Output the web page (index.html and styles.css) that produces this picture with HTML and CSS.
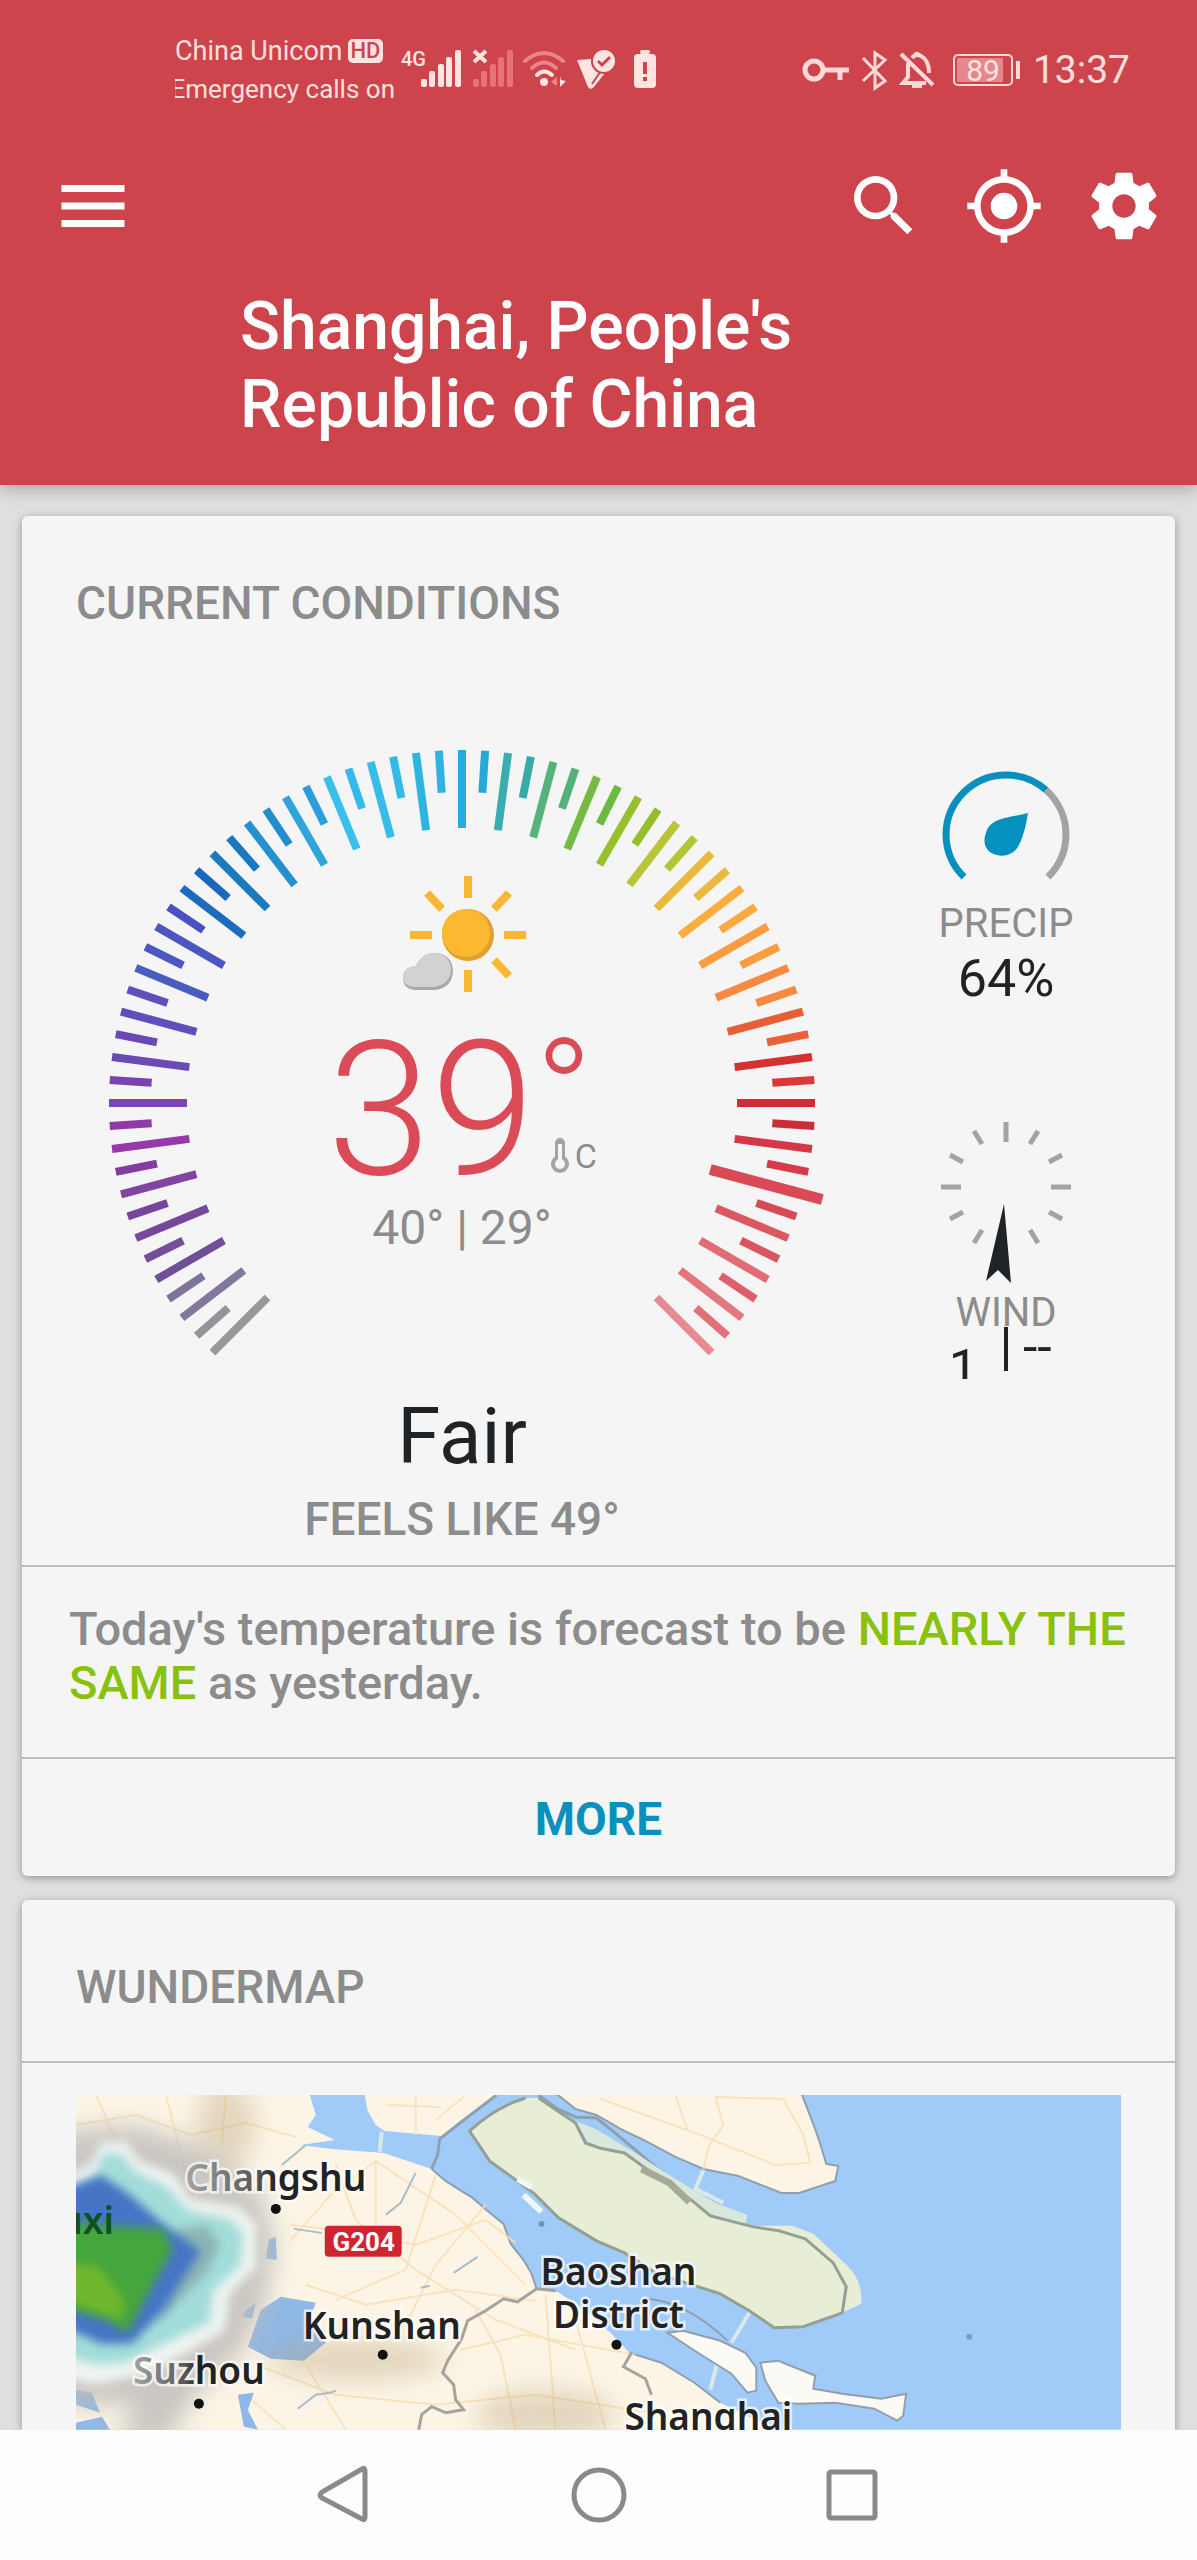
FILE: index.html
```html
<!DOCTYPE html>
<html lang="en">
  <head>
    <meta charset="UTF-8" />
    <meta name="viewport" content="width=device-width, initial-scale=1.0" />
    <title>Weather - Shanghai</title>
    <link rel="stylesheet" href="styles.css">
  </head>
  <body>
    <header class="header">
      <div class="status">
        <div class="carrier">
          <div class="carrier-name">China Unicom <span class="hd">HD</span></div>
          <div class="carrier-sub"><span>Emergency calls on</span></div>
        </div>
        <svg class="status-icons" width="260" height="44" viewBox="400 46 260 44" fill="#ffe4e1">
          <text class="net" x="401" y="66">4G</text>
          <g>
            <rect x="421" y="79" width="6" height="8" rx="2" />
            <rect x="429" y="71" width="6" height="16" rx="2" />
            <rect x="438" y="64" width="6" height="23" rx="2" />
            <rect x="446" y="57" width="6" height="30" rx="2" />
            <rect x="455" y="50" width="6" height="37" rx="2" />
          </g>
          <path d="M474 51l12 11M486 51l-12 11" stroke="#ffe4e1" stroke-width="4" />
          <g fill="#e8727a">
            <rect x="473" y="79" width="6" height="8" rx="2" />
            <rect x="481" y="71" width="6" height="16" rx="2" />
            <rect x="490" y="64" width="6" height="23" rx="2" />
            <rect x="498" y="57" width="6" height="30" rx="2" />
            <rect x="507" y="50" width="6" height="37" rx="2" />
          </g>
          <g fill="none" stroke="#ec8388" stroke-width="4" stroke-linecap="round">
            <path d="M525 61q19-16 38 0" />
            <path d="M532 68q12-11 24 0" />
            <path d="M537 75q7-7 15 0" stroke="#ffe4e1" />
          </g>
          <circle cx="544" cy="82" r="4" />
          <path d="M551 82l6-5v9z" fill="#ec8388" />
          <path d="M560 76l1 4 5 1-6 6z" />
          <path d="M577 60l14-1q0 12 14 14l-12 15q-3 2-5-1z" />
          <path d="M592 84l11-16" stroke="#ce444d" stroke-width="2" />
          <circle cx="604" cy="61" r="13" fill="#ce444d" />
          <circle cx="604" cy="61" r="11" />
          <path d="M598 61l4 4 8-8" fill="none" stroke="#ce444d" stroke-width="3" />
          <rect x="640" y="50" width="10" height="4" rx="2" />
          <rect x="634" y="54" width="22" height="34" rx="4" />
          <path d="M645 62v12M645 77v4" stroke="#ce444d" stroke-width="4" />
        </svg>
        <div class="status-right">
          <svg width="220" height="44" viewBox="802 46 220 44" fill="none" stroke="#ffd9d6" stroke-width="4">
            <circle cx="814" cy="68" r="9" stroke-width="5" />
            <path d="M824 68h25M840 68v10" stroke-width="5" />
            <path d="M863 56l22 23-10 7V51l10 7-22 21" stroke-width="3" />
            <path d="M901 52l32 31M908 61v14l-5 6h23M912 56q4-5 9-2 8 4 8 17M915 54q1-4 4-1" stroke-width="4" />
            <path d="M912 84h10" />
            <rect x="954" y="53" width="58" height="30" rx="4" stroke-width="2" />
            <rect x="957" y="56" width="46" height="24" fill="#e6878d" stroke="none" />
            <path d="M1018 59v18" />
            <text class="battery" x="983" y="79">89</text>
          </svg>
          <span class="clock">13:37</span>
        </div>
      </div>
      <nav class="toolbar">
        <button class="icon-btn" aria-label="Menu">
          <svg width="84" height="84" viewBox="0 0 24 24"><path d="M3 18h18v-2H3v2zm0-5h18v-2H3v2zm0-7v2h18V6H3z" /></svg>
        </button>
        <div class="actions">
          <button class="icon-btn" aria-label="Search">
            <svg width="80" height="80" viewBox="0 0 24 24"><path d="M15.5 14h-.79l-.28-.27A6.471 6.471 0 0 0 16 9.5 6.5 6.5 0 1 0 9.5 16c1.61 0 3.09-.59 4.23-1.57l.27.28v.79l5 4.99L20.49 19l-4.99-5zm-6 0C7.01 14 5 11.99 5 9.5S7.01 5 9.5 5 14 7.01 14 9.5 11.99 14 9.5 14z" /></svg>
          </button>
          <button class="icon-btn" aria-label="My location">
            <svg width="80" height="80" viewBox="0 0 24 24"><path d="M12 8c-2.21 0-4 1.79-4 4s1.79 4 4 4 4-1.790 4-4-1.790-4-4-4zm8.940 3A8.994 8.994 0 0 0 13 3.060V1h-2v2.060A8.994 8.994 0 0 0 3.060 11H1v2h2.060A8.994 8.994 0 0 0 11 20.940V23h2v-2.060A8.994 8.994 0 0 0 20.940 13H23v-2h-2.060zM12 19c-3.870 0-7-3.130-7-7s3.130-7 7-7 7 3.130 7 7-3.130 7-7 7z" /></svg>
          </button>
          <button class="icon-btn" aria-label="Settings">
            <svg width="80" height="80" viewBox="0 0 24 24"><path d="M19.430 12.980c.04-.32.07-.64.07-.98s-.03-.66-.07-.98l2.110-1.650c.19-.15.24-.42.12-.64l-2-3.460c-.12-.22-.39-.3-.61-.22l-2.490 1c-.52-.4-1.080-.73-1.690-.98l-.38-2.650A.488.488 0 0 0 14 2h-4c-.25 0-.46.18-.49.42l-.38 2.650c-.61.25-1.170.59-1.690.98l-2.490-1c-.23-.09-.49 0-.61.22l-2 3.460c-.13.22-.07.49.12.64l2.110 1.650c-.04.32-.07.65-.07.98s.03.66.07.98l-2.110 1.650c-.19.15-.24.42-.12.64l2 3.460c.12.22.39.3.61.22l2.490-1c.52.4 1.080.73 1.690.98l.38 2.650c.03.24.24.42.49.42h4c.25 0 .46-.18.49-.42l.38-2.650c.61-.25 1.170-.59 1.690-.98l2.490 1c.23.09.49 0 .61-.22l2-3.460c.12-.22.07-.49-.12-.64l-2.110-1.650zM12 15.500c-1.930 0-3.500-1.570-3.500-3.500s1.570-3.500 3.500-3.500 3.500 1.570 3.500 3.500-1.570 3.500-3.500 3.500z" /></svg>
          </button>
        </div>
      </nav>
      <h1 class="city">Shanghai, People's Republic of China</h1>
    </header>

    <main class="content">
      <section class="card">
        <h2 class="card-title">CURRENT CONDITIONS</h2>
        <div class="conditions">
          <div class="now">
            <div class="gauge">
              <svg id="dial" class="dial" viewBox="-380 -360 760 620"></svg>
              <div class="readout">
                <svg class="sky" width="130" height="122" viewBox="397 874 130 122">
                  <g stroke="#f9b733" stroke-width="8">
                    <path d="M468 876v22M468 970v22M410 935h22M504 935h22M427 893l15 16M509 893l-15 16M509 976l-15-16" />
                  </g>
                  <circle cx="468" cy="935" r="26" fill="#e0a032" />
                  <ellipse cx="466" cy="933" rx="24" ry="24" fill="#fbb830" />
                  <path d="M415 990q-12-1-12-12t13-12q6-13 19-13 17 1 18 18-1 17-18 19z" fill="#a9a9a9" />
                  <path d="M415 987q-12-1-12-10t13-11q6-13 18-13 16 1 17 17-1 15-18 17z" fill="#d2d2d2" />
                </svg>
                <div class="temp">
                  <span class="temp-value">39</span>
                  <div class="temp-unit">
                    <span class="degree">°</span>
                    <span class="scale">
                      <svg width="18" height="36" viewBox="0 0 18 36">
                        <path d="M9 5v20" stroke="#a4a4a4" stroke-width="10" stroke-linecap="round" />
                        <circle cx="9" cy="26" r="9" fill="#a4a4a4" />
                        <path d="M9 6v20" stroke="#f5f5f5" stroke-width="4" />
                        <circle cx="9" cy="26" r="5" fill="#f5f5f5" />
                      </svg>C</span>
                  </div>
                </div>
                <div class="high-low">40° | 29°</div>
              </div>
            </div>
            <p class="sky-text">Fair</p>
            <p class="feels">FEELS LIKE 49°</p>
          </div>

          <div class="side">
            <svg width="132" height="115" viewBox="-66 -65 132 115" fill="none" stroke-width="7">
              <path d="M40-45A60 60 0 0 1 60 0 60 60 0 0 1 42 42" stroke="#a3a3a3" />
              <path d="M-42 42A60 60 0 0 1-60 0 60 60 0 0 1 0-60 60 60 0 0 1 40-45" stroke="#0a90bd" />
              <path d="M22-22Q19-2 13 10C8 20-2 22-9 20-20 18-24 8-20-2-16-18 4-17 22-22z" fill="#0591bf" />
            </svg>
            <div class="label">PRECIP</div>
            <div class="value">64%</div>

            <svg class="compass" width="132" height="164" viewBox="-66 -66 132 164">
              <path d="M0-65v20M-65 0h20M65 0h-20M-32-56l8 13M32-56l-8 13M-56-32l13 7M56-32l-13 7M-56 32l13-7M56 32l-13-7M-32 56l8-13M32 56l-8-13" stroke="#a3a3a3" stroke-width="5" />
              <path d="M-2 17L5 96-8 83-20 94z" fill="#202325" />
            </svg>
            <div class="label wind-label">WIND</div>
            <div class="wind">
              <span class="wind-speed">1</span>
              <span class="wind-bar"></span>
              <span class="wind-gust">--</span>
            </div>
          </div>
        </div>
        <p class="forecast">Today's temperature is forecast to be <span class="same">NEARLY THE SAME</span> as yesterday.</p>
        <button class="more">MORE</button>
      </section>

      <section class="card map-card">
        <h2 class="card-title">WUNDERMAP</h2>
        <div class="map-wrap">
          <svg class="map" viewBox="0 0 1046 335">
            <defs>
              <filter id="soft" x="-20%" y="-20%" width="140%" height="140%"><feGaussianBlur stdDeviation="5" /></filter>
              <filter id="haze" x="-20%" y="-20%" width="140%" height="140%"><feGaussianBlur stdDeviation="12" /></filter>
              <linearGradient id="fade"><stop offset="0" stop-color="#a5a5a5" /><stop offset=".4" stop-color="#555" /><stop offset=".5" stop-color="#222" /></linearGradient>
            </defs>
            <rect width="1046" height="335" fill="#a0cbf8" />

            <!-- mainland -->
            <g fill="#fcf5e6" stroke="#8f9fae" stroke-width="2">
              <path stroke="none" d="M0 0H234L240 20 232 32 259 45 225 50 256 54 308 58 356 74 366 83 397 103 428 129 435 149 456 179 461 194 482 197 512 217 536 239 554 258 586 268 619 288 645 308 700 335H0z" />
              <path fill="none" d="M356 74L370 86 384 95 397 103 412 116 428 129 435 149 448 165 456 179 461 194M554 258L586 268 619 288 645 308" />
              <path stroke="none" d="M289 0L292 16 300 30 309 36 366 41 383 29 421 0z" />
              <path d="M480-2L500 14 521 20 545 34 570 46 600 62 628 74 663 81 706 98 724 98 760 86 763 71 751 69 744 46 738 29 726-2z" />
            </g>
            <path d="M356 74L362 60 364 44 383 29 421 0M463 0L482 14 500 22 521 23 548 45 580 72 612 96 640 113" fill="none" stroke="#8f9fae" stroke-width="3" />

            <!-- roads -->
            <g fill="none" stroke="#f8dfb4" stroke-width="2" opacity=".8">
              <path d="M0 30L60 20 115 40 170 28 220 42M20 0L40 45M90 0L108 70 120 120M150 0L146 50" />
              <path d="M215 145L255 100 300 66 380 120 450 190M215 130L260 135 340 150 410 125 440 148M230 190L290 210 380 195 460 206" />
              <path d="M260 70L280 125 340 175 420 225 500 255M300 66L300 130M360 80L330 175 260 205M410 110L360 170 330 230" />
              <path d="M180 270L260 300 360 310 460 300 590 320M170 300L210 335M230 270L270 335M400 215L425 260 440 335M470 200L480 335M385 255L450 240 560 260M500 225L530 335" />
              <path d="M525 4L620 38 700 70 735 68 728 40 708 4 640 2M640 2L648 30 634 50 628 74M600 0L612 35M310 10L365 12M340 0V40M390 0L360 25" />
            </g>
            <path d="M304 57L306 37M628 75L620 94 648 108M674 218L656 248M644 260L635 295" stroke="#d9e9e8" stroke-width="4" fill="none" />

            <!-- islands -->
            <path d="M514 50L500 26 520 34 560 58 600 84 640 108 672 120 670 130 600 108z" fill="#d8e9dc" />
            <path d="M450 3Q420 12 394 36L414 66 432 79 459 99 483 123 521 146 549 158 580 178 620 191 645 199 674 216 699 233 728 232 767 218 786 209Q788 185 770 169L738 139 717 131 678 131 635 121 617 106 578 79 549 58 524 53 510 48 500 28 463 3z" fill="#e8edd6" />
            <path d="M450 3Q420 12 394 36L414 66 432 79 459 99 483 123 521 146 549 158 580 178 620 191 645 199 674 216 699 233 728 232 767 218 771 192 758 168 730 144 704 136 678 132 635 121 617 106 578 79 549 58 524 53 510 48 500 28 463 3" fill="none" stroke="#95a094" stroke-width="3" />
            <path d="M566 74L594 88 614 107" fill="none" stroke="#a5aa98" stroke-width="7" />
            <path d="M442 84l14 8M448 100l18 17" stroke="#f1f7f5" stroke-width="6" />
            <g fill="#fcfaf5" stroke="#8f9fae" stroke-width="2">
              <path d="M592 238L608 236 645 246 670 258 681 273 681 296 672 298 656 279 624 259z" />
              <path d="M685 268L703 266 740 281 738 294 767 299 806 304 831 299 828 321 822 326 799 314 760 308 724 309 703 308 690 286z" />
              <path fill="none" d="M570 204Q610 206 652 246" />
            </g>

            <!-- lakes and borders -->
            <path d="M193 145L200 142 201 165 190 164zM170 215L180 208 176 224 166 222zM185 215L205 202 240 208 232 230 250 248 228 266 195 264 172 252zM0 295L16 298 24 318 0 310zM0 328L26 322 34 335H0zM162 300L178 298 172 315 182 335 168 332z" fill="#8fb8e6" />
            <path d="M206 70L230 50M340 78L325 108 310 120M378 178L402 162M345 193L354 191M222 314L240 300 254 298 260 296M218 134L246 138" fill="none" stroke="#a9bccb" stroke-width="2" />
            <path d="M480 196L461 194 442 207 428 204 410 216 392 226 386 244 372 266 367 278 378 290 380 305 388 315 370 318 356 312 346 320 343 335M556 258L548 272 570 284 576 300" fill="none" stroke="#a6a39d" stroke-width="3" />
            <g filter="url(#haze)" opacity=".35" fill="#b79f77">
              <ellipse cx="280" cy="265" rx="90" ry="22" />
              <ellipse cx="470" cy="320" rx="70" ry="26" />
              <ellipse cx="150" cy="30" rx="30" ry="45" />
            </g>

            <!-- radar -->
            <g filter="url(#haze)">
              <path d="M-20 35L60 30 130 52 185 95 200 150 190 210 165 260 120 300 90 350H40L60 310-20 310z" fill="#bdbbb9" opacity=".8" />
            </g>
            <g filter="url(#soft)">
              <path d="M-20 85L14 70 25 48 49 46 64 66 97 79 115 104 163 112 180 129 180 173 154 199 149 236 115 256 70 280 18 290-20 280z" fill="#eef4f2" />
              <path d="M-20 110L18 82 27 58 45 58 60 76 92 92 112 115 155 124 168 140 165 170 138 196 134 228 104 242 50 268 20 270-20 260z" fill="#a3ddd9" />
              <path d="M100 135L130 130 145 150 130 180 95 215 80 230z" fill="#8bb5b5" />
            </g>
            <path d="M-30 100L25 80 53 99 87 129 125 156 87 216 56 249 25 249-30 224z" fill="#4574c4" filter="url(#soft)" />
            <path d="M-30 122L36 132 88 134 96 156 70 203 52 238 30 225-30 208z" fill="#45a63c" filter="url(#soft)" />
            <path d="M-30 165L22 172 48 205 46 225-30 200z" fill="#7cbc2c" opacity=".8" filter="url(#soft)" />

            <g class="places">
              <text x="200" y="96" fill="url(#fade)">Changshu</text>
              <text x="306" y="244">Kunshan</text>
              <text x="123" y="289" fill="url(#fade)">Suzhou</text>
              <text x="543" y="190">Baoshan</text>
              <text x="543" y="233">District</text>
              <text x="633" y="335">Shanghai</text>
            </g>
            <text class="wuxi" x="38" y="139">Wuxi</text>
            <g fill="#111">
              <circle cx="200" cy="114" r="5" />
              <circle cx="307" cy="260" r="5" />
              <circle cx="123" cy="309" r="5" />
              <circle cx="541" cy="250" r="5" />
            </g>
            <circle cx="894" cy="242" r="3" fill="#759fc4" />
            <circle cx="466" cy="129" r="3" fill="#6d93b8" />
            <rect x="249" y="131" width="77" height="31" rx="4" fill="#cf2531" />
            <text class="road" x="288" y="156">G204</text>
          </svg>
        </div>
      </section>
    </main>

    <footer class="navbar">
      <button class="icon-btn" aria-label="Back">
        <svg width="60" height="60" viewBox="0 0 60 60"><path d="M47 4q3-2 3 2v46q0 4-3 2L7 33q-4-3 0-6z" /></svg>
      </button>
      <button class="icon-btn" aria-label="Home">
        <svg width="60" height="60" viewBox="0 0 60 60"><circle cx="30" cy="30" r="25" /></svg>
      </button>
      <button class="icon-btn" aria-label="Recent apps">
        <svg width="60" height="60" viewBox="0 0 60 60"><rect x="6" y="7" width="46" height="46" rx="2" /></svg>
      </button>
    </footer>

    <script>
      // one colour per tick, from the cold end to the hot end
      const colors = [
        "#9a979b", "#97939a", "#83779d", "#7f739a", "#6f4f98", "#724f9a", "#76479a", "#77459b",
        "#8244a3", "#813ea1", "#9639ab", "#8f3aa8", "#7a45b0", "#7a43b0", "#6a4ab5", "#6b48b3",
        "#5d50ba", "#5e4fba", "#4a5cc0", "#4b58c0", "#4b55c4", "#4b50c5", "#1c6bbd", "#1d66bd",
        "#1a7ac0", "#1878c0", "#2590d0", "#238ccd", "#2fa5dc", "#2b9ddb", "#3abfec", "#35b8ea",
        "#38bdea", "#35b9e6", "#2db5e0", "#30b3de", "#29abdc", "#28a8d8", "#3aaeaf", "#36abaa",
        "#55b47b", "#52b278", "#74ba44", "#6cba40", "#98c02c", "#95bf2a", "#b9c438", "#b4c434",
        "#e8b93d", "#eab93f", "#fbad3f", "#faa93f", "#f99c42", "#fb9c40", "#f78a42", "#f68a42",
        "#e65f36", "#e96038", "#d2332f", "#d93a38", "#d02c38", "#cc2c38", "#d43846", "#d73a48",
        "#d94a56", "#d94a57", "#d95862", "#db5561", "#e06c76", "#dc5f6b", "#e37780", "#e17079",
        "#e78b92"
      ];
      const current = 64;
      const dial = document.getElementById("dial");

      colors.forEach((color, i) => {
        const tick = document.createElementNS("http://www.w3.org/2000/svg", "line");
        const long = i % 2 === 0;
        tick.setAttribute("y1", i === current ? -373 : -353);
        tick.setAttribute("y2", i === current ? -257 : long ? -275 : -311);
        tick.setAttribute("stroke", color);
        tick.setAttribute("stroke-width", i === current ? 11 : 8);
        tick.setAttribute("transform", `rotate(${-135 + i * 3.75})`);
        dial.appendChild(tick);
      });
    </script>
  </body>
</html>
```

FILE: styles.css
```css
* {
  box-sizing: border-box;
}

body {
  margin: 0;
  background-color: #dfdfdf;
  font-family: Roboto, Arial, sans-serif;
  color: #8c8c8c;
}

h1,
h2,
p {
  margin: 0;
}

svg {
  display: block;
}

button {
  padding: 0;
  border: none;
  background: none;
  font-family: inherit;
  cursor: pointer;
}

/* header */
.header {
  position: relative;
  padding-bottom: 41px;
  background-color: #ce444d;
  box-shadow: 0 4px 16px rgba(0, 0, 0, 0.25);
  color: white;
}

.status {
  display: flex;
  align-items: flex-start;
  padding: 32px 67px 0 175px;
  height: 136px;
  color: #ffe0dd;
}

.carrier {
  width: 220px;
  margin-right: 5px;
  font-size: 27px;
  line-height: 38px;
  white-space: nowrap;
}

.carrier-name {
  display: flex;
  align-items: center;
  gap: 5px;
}

.hd {
  padding: 0 3px;
  border-radius: 5px;
  background-color: #ffe4e1;
  color: #ce444d;
  font-size: 22px;
  font-weight: 500;
  line-height: 24px;
}

.carrier-sub {
  display: flex;
  justify-content: flex-end;
  overflow: hidden;
  font-size: 26px;
}

.status-icons,
.status-right {
  margin-top: 14px;
}

.net {
  font-size: 20px;
  font-weight: 500;
}

.status-right {
  display: flex;
  align-items: center;
  gap: 11px;
  margin-left: auto;
}

.battery {
  fill: #ffe4e1;
  stroke: none;
  font-size: 30px;
  text-anchor: middle;
}

.clock {
  font-size: 39px;
  line-height: 48px;
}

.toolbar {
  display: flex;
  align-items: center;
  justify-content: space-between;
  height: 140px;
  padding: 0 33px 0 51px;
}

.actions {
  display: flex;
  gap: 40px;
}

.toolbar svg {
  fill: white;
}

.city {
  max-width: 860px;
  padding: 12px 0 0 240px;
  font-size: 66px;
  font-weight: 500;
  line-height: 78px;
}

/* cards */
.content {
  display: flex;
  flex-direction: column;
  gap: 24px;
  padding: 31px 22px 0;
}

.card {
  border-radius: 6px;
  background-color: #f5f5f5;
  box-shadow: 0 2px 8px rgba(0, 0, 0, 0.35);
}

.card-title {
  padding: 60px 54px 0;
  font-size: 46px;
  font-weight: 500;
  line-height: 54px;
}

.conditions {
  display: grid;
  grid-template-columns: 1fr 208px;
  padding: 113px 65px 19px 0;
}

.now,
.side,
.readout {
  display: flex;
  flex-direction: column;
  align-items: center;
}

.gauge {
  display: grid;
  justify-items: center;
}

.dial,
.readout {
  grid-area: 1 / 1;
}

.dial {
  width: 760px;
  max-width: 100%;
}

.readout {
  padding-top: 131px;
}

.temp {
  display: flex;
  margin-top: 40px;
  height: 150px;
}

.temp-value {
  color: #db4b57;
  font-size: 187px;
  font-weight: 300;
  line-height: 150px;
}

.temp-unit {
  display: flex;
  flex-direction: column;
  justify-content: space-between;
  padding-bottom: 12px;
}

.degree {
  height: 60px;
  color: #db4b57;
  font-size: 154px;
  font-weight: 300;
  line-height: 120px;
}

.scale {
  display: flex;
  align-items: center;
  gap: 6px;
  padding-left: 16px;
  font-size: 34px;
  line-height: 36px;
}

.high-low {
  margin-top: 15px;
  font-size: 48px;
  line-height: 54px;
}

.sky-text {
  margin-top: 28px;
  color: #202325;
  font-size: 78px;
  line-height: 92px;
}

.feels {
  margin-top: 9px;
  font-size: 46px;
  font-weight: 500;
  line-height: 54px;
}

.side {
  padding-top: 27px;
}

.label {
  margin-top: 15px;
  font-size: 40px;
  line-height: 48px;
}

.value {
  color: #202325;
  font-size: 52px;
  line-height: 62px;
}

.compass {
  margin-top: 111px;
}

.wind-label {
  margin-top: 4px;
}

.wind {
  display: grid;
  grid-template-columns: 1fr 4px 1fr;
  width: 100%;
  height: 52px;
  margin-top: -10px;
  overflow: hidden;
  color: #202325;
  font-size: 52px;
}

.wind-speed {
  padding-right: 26px;
  line-height: 84px;
  text-align: right;
}

.wind-bar {
  height: 44px;
  background-color: #202325;
}

.wind-gust {
  padding-left: 15px;
  line-height: 42px;
}

.forecast {
  padding: 35px 47px 47px;
  border-top: 2px solid #bdbdbd;
  font-size: 47px;
  font-weight: 500;
  line-height: 54px;
}

.same {
  color: #88c20d;
}

.more {
  display: block;
  width: 100%;
  height: 119px;
  padding-top: 2px;
  border-top: 2px solid #bdbdbd;
  color: #0a90bd;
  font-size: 46px;
  font-weight: 700;
}

/* map */
.map-card {
  border-radius: 6px 6px 0 0;
}

.map-wrap {
  margin-top: 47px;
  padding: 32px 54px 0;
  border-top: 2px solid #bdbdbd;
}

.map {
  width: 100%;
}

.places {
  fill: #222;
  stroke: rgba(255, 255, 255, 0.7);
  stroke-width: 5px;
  paint-order: stroke;
  font-family: "Noto Sans", sans-serif;
  font-size: 37px;
  font-weight: 600;
  text-anchor: middle;
}

.wuxi {
  fill: #10521f;
  font-family: "Noto Sans", sans-serif;
  font-size: 37px;
  font-weight: 600;
  text-anchor: end;
}

.road {
  fill: white;
  font-size: 26px;
  font-weight: 700;
  text-anchor: middle;
}

/* system navigation */
.navbar {
  position: relative;
  display: flex;
  align-items: center;
  justify-content: center;
  gap: 194px;
  height: 131px;
  background-color: #fdfdfd;
}

.navbar svg {
  fill: none;
  stroke: #8a8a8a;
  stroke-width: 5px;
}
```
